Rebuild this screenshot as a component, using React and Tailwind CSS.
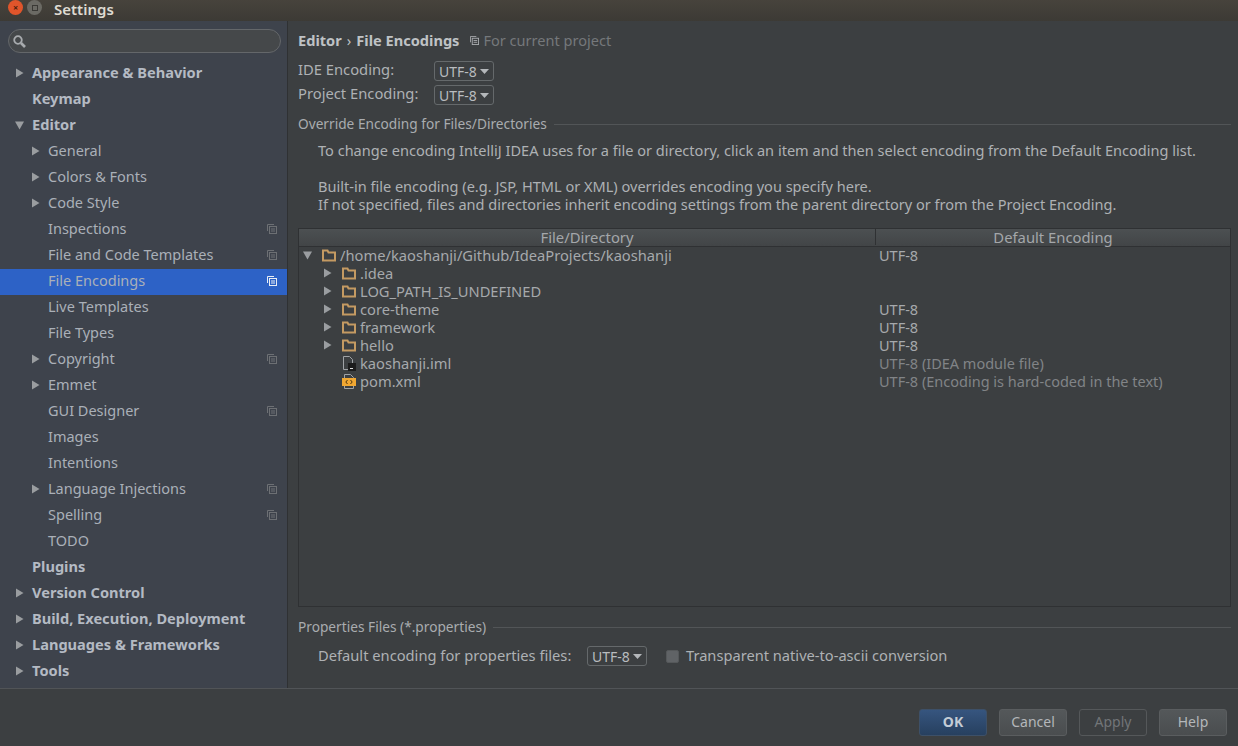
const NAV = [
  { label: 'Appearance & Behavior', bold: true, arrow: 'right' },
  { label: 'Keymap', bold: true },
  { label: 'Editor', bold: true, arrow: 'down' },
  { label: 'General', sub: true, arrow: 'right' },
  { label: 'Colors & Fonts', sub: true, arrow: 'right' },
  { label: 'Code Style', sub: true, arrow: 'right' },
  { label: 'Inspections', sub: true, project: true },
  { label: 'File and Code Templates', sub: true, project: true },
  { label: 'File Encodings', sub: true, project: true, selected: true },
  { label: 'Live Templates', sub: true },
  { label: 'File Types', sub: true },
  { label: 'Copyright', sub: true, arrow: 'right', project: true },
  { label: 'Emmet', sub: true, arrow: 'right' },
  { label: 'GUI Designer', sub: true, project: true },
  { label: 'Images', sub: true },
  { label: 'Intentions', sub: true },
  { label: 'Language Injections', sub: true, arrow: 'right', project: true },
  { label: 'Spelling', sub: true, project: true },
  { label: 'TODO', sub: true },
  { label: 'Plugins', bold: true },
  { label: 'Version Control', bold: true, arrow: 'right' },
  { label: 'Build, Execution, Deployment', bold: true, arrow: 'right' },
  { label: 'Languages & Frameworks', bold: true, arrow: 'right' },
  { label: 'Tools', bold: true, arrow: 'right' },
];

const FILES = [
  { name: '/home/kaoshanji/Github/IdeaProjects/kaoshanji', enc: 'UTF-8', icon: 'folder', arrow: 'down', root: true },
  { name: '.idea', icon: 'folder', arrow: 'right' },
  { name: 'LOG_PATH_IS_UNDEFINED', icon: 'folder', arrow: 'right' },
  { name: 'core-theme', enc: 'UTF-8', icon: 'folder', arrow: 'right' },
  { name: 'framework', enc: 'UTF-8', icon: 'folder', arrow: 'right' },
  { name: 'hello', enc: 'UTF-8', icon: 'folder', arrow: 'right' },
  { name: 'kaoshanji.iml', enc: 'UTF-8 (IDEA module file)', icon: 'iml', muted: true },
  { name: 'pom.xml', enc: 'UTF-8 (Encoding is hard-coded in the text)', icon: 'xml', muted: true },
];

function Arrow({ dir }) {
  return (
    <svg width="9" height="10" viewBox="0 0 9 10" className="shrink-0">
      {dir === 'down' ? <path d="M0 1.5h9L4.5 9.5z" fill="#9a9da0" /> : <path d="M1 .5l7.5 4.5L1 9.5z" fill="#9a9da0" />}
    </svg>
  );
}

function ProjectIcon({ color = '#6d7074', size = 10 }) {
  return (
    <svg width={size} height={size} viewBox="0 0 10 10" className="shrink-0" fill="none" stroke={color} strokeWidth="1">
      <path d="M.5 7V.5H7" />
      <rect x="2.5" y="2.5" width="7" height="7" />
      <path d="M4 5h4M4 7h4" />
    </svg>
  );
}

function SearchIcon() {
  return (
    <svg width="13" height="13" viewBox="0 0 13 13" className="shrink-0" fill="none" stroke="#a8abae">
      <circle cx="5" cy="5" r="3.8" strokeWidth="1.8" />
      <path d="M8 8l4 4" strokeWidth="2.6" />
    </svg>
  );
}

function FileIcon({ type }) {
  if (type === 'folder') {
    return (
      <svg width="14" height="13" viewBox="0 0 14 13" className="shrink-0" fill="none">
        <path d="M1 1.5h4.5l1 2H13v8H1z" stroke="#c49a62" strokeWidth="2" />
      </svg>
    );
  }
  if (type === 'iml') {
    return (
      <svg width="14" height="15" viewBox="0 0 14 15" className="shrink-0">
        <path d="M1.5.5h6l3 3v10h-9z" fill="none" stroke="#a0a3a6" strokeWidth="1" />
        <rect x="6" y="7" width="8" height="8" fill="#1c1c1c" />
        <rect x="8" y="12" width="3" height="1" fill="#ddd" />
      </svg>
    );
  }
  return (
    <svg width="14" height="15" viewBox="0 0 14 15" className="shrink-0" fill="none">
      <path d="M2.5 4V.5h6l3 3V4M2.5 12v2.5h9V12" stroke="#a0a3a6" strokeWidth="1" />
      <rect x="0" y="4" width="14" height="8" fill="#f0a732" />
      <path d="M5.5 6L3.8 8l1.7 2M8.5 6l1.7 2-1.7 2" stroke="#4a3310" strokeWidth="1" />
    </svg>
  );
}

function Combo() {
  return (
    <div className="flex h-[20px] w-[60px] shrink-0 items-center rounded-[3px] border border-[#65696b] pl-[4px] text-[14px] text-[#b9bcbf]">
      <span className="mt-[2px]">UTF-8</span>
      <svg width="9" height="5" viewBox="0 0 9 5" className="ml-[3px]">
        <path d="M0 0h9L4.5 5z" fill="#b4b7ba" />
      </svg>
    </div>
  );
}

function GroupTitle({ children }) {
  return (
    <div className="flex items-center gap-[7px] text-[13.7px] text-[#a9acaf]">
      <span className="whitespace-nowrap">{children}</span>
      <div className="h-px flex-1 bg-[#525557]" />
    </div>
  );
}

function FooterButton({ children, variant }) {
  const styles = {
    ok: 'border-[#3d5068] bg-gradient-to-b from-[#36557f] to-[#27405f] font-bold text-[#c3ccd6]',
    normal: 'border-[#5a5d5f] bg-gradient-to-b from-[#54585a] to-[#4a4d4f] text-[#b4b7ba]',
    disabled: 'border-[#55585a] text-[#727578]',
  };
  return (
    <div className={`flex h-[27px] w-[68px] items-center justify-center rounded-[3px] border pb-[2px] ${styles[variant]}`}>
      {children}
    </div>
  );
}

export default function App() {
  return (
    <div className="flex h-[746px] w-[1238px] flex-col overflow-hidden bg-[#3c3f41] font-['Noto_Sans',sans-serif] text-[14.56px] leading-[18px]">
      <div className="flex h-[21px] shrink-0 items-start bg-gradient-to-b from-[#47433c] to-[#3c3a35] pl-[8px]">
        <div className="flex h-[15px] w-[15px] items-center justify-center rounded-full bg-[#e0552b] text-[9px] font-bold text-[#4a1e0d]">×</div>
        <div className="ml-[4px] flex h-[15px] w-[15px] items-center justify-center rounded-full bg-[#6b6a64]">
          <div className="h-[6px] w-[6px] border border-[#3a3935]" />
        </div>
        <span className="ml-[12px] text-[15px] font-semibold text-[#dfdbd2]">Settings</span>
      </div>

      <div className="flex min-h-0 flex-1">
        <aside className="w-[288px] shrink-0 border-r border-[#2f3133] bg-[#3e434c]">
          <div className="mx-[8px] mt-[8px] flex h-[24px] w-[273px] items-center rounded-full border border-[#64676a] bg-[#45484a] pl-[4px]">
            <SearchIcon />
          </div>
          <div className="mt-[8px]">
            {NAV.map((item) => (
              <div
                key={item.label}
                className={`relative flex h-[26px] items-center pb-[2px] ${item.selected ? 'bg-[#2d62c6]' : ''} ${item.sub ? 'pl-[48px]' : 'pl-[32px]'} ${item.bold ? 'text-[14.6px] font-bold text-[#b4bac3]' : 'text-[14.5px] text-[#aab0b8]'}`}
              >
                {item.arrow && (
                  <span className={`absolute ${item.sub ? 'left-[31px]' : 'left-[15px]'}`}>
                    <Arrow dir={item.arrow} />
                  </span>
                )}
                <span className="-translate-y-px whitespace-nowrap">{item.label}</span>
                {item.project && (
                  <span className="absolute right-[10px]">
                    <ProjectIcon color={item.selected ? '#e8edf5' : '#6d7074'} />
                  </span>
                )}
              </div>
            ))}
          </div>
        </aside>

        <main className="flex min-w-0 flex-1 flex-col pl-[10px] pr-[7px] text-[#aeb1b4]">
          <div className="mt-[10px] flex h-[18px] items-center">
            <span className="text-[14.6px] font-bold text-[#bfc2c5]">Editor</span>
            <span className="mx-[5px] text-[#bfc2c5]">›</span>
            <span className="text-[14.6px] font-bold text-[#bfc2c5]">File Encodings</span>
            <span className="ml-[11px] mr-[4px]"><ProjectIcon color="#a9acaf" size={9} /></span>
            <span className="text-[#75787b]">For current project</span>
          </div>

          <div className="mt-[12px] flex h-[20px] items-center">
            <span className="w-[136px] pb-[4px] text-[14.75px]">IDE Encoding:</span>
            <Combo />
          </div>
          <div className="mt-[4px] flex h-[20px] items-center">
            <span className="w-[136px] pb-[4px] text-[14.75px]">Project Encoding:</span>
            <Combo />
          </div>

          <div className="mt-[10px]"><GroupTitle>Override Encoding for Files/Directories</GroupTitle></div>
          <div className="mt-[8px] pl-[20px]">
            <p>To change encoding IntelliJ IDEA uses for a file or directory, click an item and then select encoding from the Default Encoding list.</p>
            <p className="mt-[18px]">Built-in file encoding (e.g. JSP, HTML or XML) overrides encoding you specify here.</p>
            <p>If not specified, files and directories inherit encoding settings from the parent directory or from the Project Encoding.</p>
          </div>

          <div className="mt-[15px] flex h-[379px] flex-col border border-[#2f3133]">
            <div className="flex h-[18px] shrink-0 border-b border-[#2f3133] bg-gradient-to-b from-[#4c5052] to-[#424547] text-[14.8px] text-[#a4a7aa]">
              <div className="w-[577px] -translate-y-px border-r border-[#2f3133] text-center">File/Directory</div>
              <div className="flex-1 -translate-y-px text-center">Default Encoding</div>
            </div>
            <div>
              {FILES.map((file) => (
                <div key={file.name} className="flex h-[18px] items-center pb-[2px]">
                  <div className={`flex w-[576px] items-center ${file.root ? 'pl-[4px]' : 'pl-[24px]'}`}>
                    <span className="flex w-[9px] shrink-0">{file.arrow && <Arrow dir={file.arrow} />}</span>
                    <span className="ml-[10px]"><FileIcon type={file.icon} /></span>
                    <span className="ml-[4px] whitespace-nowrap text-[14.7px] text-[#a6a9ac]">{file.name}</span>
                  </div>
                  {file.enc && (
                    <span className={`whitespace-nowrap pl-[4px] text-[14.5px] ${file.muted ? 'text-[#818487]' : 'text-[#a6a9ac]'}`}>{file.enc}</span>
                  )}
                </div>
              ))}
            </div>
          </div>

          <div className="mt-[11px]"><GroupTitle>Properties Files (*.properties)</GroupTitle></div>
          <div className="mt-[8px] flex h-[24px] items-center pl-[20px]">
            <span className="w-[269px] whitespace-nowrap pb-[2px] text-[14.7px]">Default encoding for properties files:</span>
            <Combo />
            <div className="ml-[19px] h-[13px] w-[13px] rounded-[2px] border border-[#55585a] bg-[#606366]" />
            <span className="ml-[7px] pb-[2px] text-[14.65px]">Transparent native-to-ascii conversion</span>
          </div>
        </main>
      </div>

      <div className="flex h-[58px] shrink-0 items-start justify-end gap-[12px] border-t border-[#515457] pr-[11px] pt-[20px] text-[14px]">
        <FooterButton variant="ok">OK</FooterButton>
        <FooterButton variant="normal">Cancel</FooterButton>
        <FooterButton variant="disabled">Apply</FooterButton>
        <FooterButton variant="normal">Help</FooterButton>
      </div>
    </div>
  );
}
